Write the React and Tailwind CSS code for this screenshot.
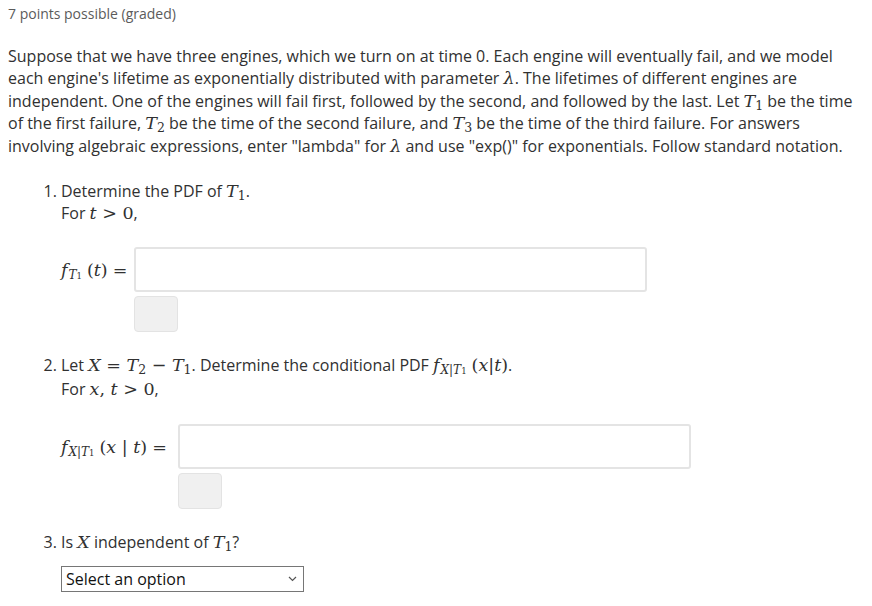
import React from 'react';

const serif = "font-['DejaVu_Serif',serif]";

function M({ children }) {
  return <span className={`${serif} text-[17.5px] leading-none whitespace-nowrap`}>{children}</span>;
}

function I({ children }) {
  return <span className="italic">{children}</span>;
}

function Sub({ children }) {
  return <sub className="text-[12.5px] not-italic">{children}</sub>;
}

function T({ n }) {
  return (
    <>
      <I>T</I>
      <Sub>{n}</Sub>
    </>
  );
}

function FSub({ x }) {
  return (
    <>
      <I>f</I>
      <sub className="text-[12px] ml-[1px]">
        {x && (
          <>
            <I>X</I>|
          </>
        )}
        <I>T</I>
        <span className="text-[8.5px] not-italic">1</span>
      </sub>
    </>
  );
}

export default function App() {
  return (
    <div className="min-h-[606px] bg-white px-2 pt-[4px] font-['Open_Sans',sans-serif] text-[#313131]">
      {/* header */}
      <div className="text-[14px] leading-[20px] text-[#5b5b5b]">7 points possible (graded)</div>

      {/* problem text */}
      <p className="mt-[21px] text-[16px] leading-[22.4px]">
        Suppose that we have three engines, which we turn on at time 0. Each engine will eventually fail, and we model
        <br />
        each engine's lifetime as exponentially distributed with parameter <M><I>λ</I></M>. The lifetimes of different
        engines are
        <br />
        independent. One of the engines will fail first, followed by the second, and followed by the last. Let{' '}
        <M><T n="1" /></M> be the time
        <br />
        of the first failure, <M><T n="2" /></M> be the time of the second failure, and <M><T n="3" /></M> be the time
        of the third failure. For answers
        <br />
        involving algebraic expressions, enter "lambda" for <M><I>λ</I></M> and use "exp()" for exponentials. Follow
        standard notation.
      </p>

      <ol className="list-decimal pl-[53px] mt-[23px] text-[16px]">
        {/* 1 */}
        <li className="leading-[22px]">
          <div>
            Determine the PDF of <M><T n="1" /></M>.
          </div>
          <div>
            For <M><I>t</I> &gt; 0</M>,
          </div>
          <div className="mt-[23px]">
            <div className="flex items-center">
              <div className="w-[73px] whitespace-nowrap">
                <M>
                  <FSub />
                  <span className="ml-[5px]">(</span>
                  <I>t</I>)<span className="ml-[5px]">=</span>
                </M>
              </div>
              <input
                type="text"
                className="w-[513px] h-[45px] bg-white border-2 border-[#e4e4e4] rounded-[3px] outline-none"
              />
            </div>
            <div className="mt-[4px] ml-[73px] w-[44px] h-[36px] bg-[#f0f0f0] border border-[#e3e3e3] rounded-[4px]" />
          </div>
        </li>

        {/* 2 */}
        <li className="mt-[21px] leading-[24px]">
          <div>
            Let{' '}
            <M>
              <I>X</I> = <T n="2" /> − <T n="1" />
            </M>
            . Determine the conditional PDF{' '}
            <M>
              <FSub x />
              <span className="ml-[5px]">(</span>
              <I>x</I>|<I>t</I>)
            </M>
            .
          </div>
          <div>
            For{' '}
            <M>
              <I>x</I>, <I>t</I> &gt; 0
            </M>
            ,
          </div>
          <div className="mt-[23px]">
            <div className="flex items-center">
              <div className="w-[117px] whitespace-nowrap">
                <M>
                  <FSub x />
                  <span className="ml-[5px]">(</span>
                  <I>x</I> | <I>t</I>)<span className="ml-[5px]">=</span>
                </M>
              </div>
              <input
                type="text"
                className="w-[513px] h-[45px] bg-white border-2 border-[#e4e4e4] rounded-[3px] outline-none"
              />
            </div>
            <div className="mt-[4px] ml-[117px] w-[44px] h-[36px] bg-[#f0f0f0] border border-[#e3e3e3] rounded-[4px]" />
          </div>
        </li>

        {/* 3 */}
        <li className="mt-[22px] leading-[22px]">
          <div>
            Is <M><I>X</I></M> independent of <M><T n="1" /></M>?
          </div>
          <div className="relative mt-[13px] w-[243px]">
            <select className="appearance-none block w-[243px] h-[26px] border border-[#767676] bg-white pl-[4px] text-[16px] leading-[24px] text-[#111]">
              <option>Select an option</option>
              <option>Yes</option>
              <option>No</option>
            </select>
            <svg
              className="absolute right-[7px] top-[10px] pointer-events-none"
              width="9"
              height="6"
              viewBox="0 0 9 6"
              fill="none"
            >
              <path d="M1 1l3.5 3.5L8 1" stroke="#555" strokeWidth="1.2" />
            </svg>
          </div>
        </li>
      </ol>
    </div>
  );
}
